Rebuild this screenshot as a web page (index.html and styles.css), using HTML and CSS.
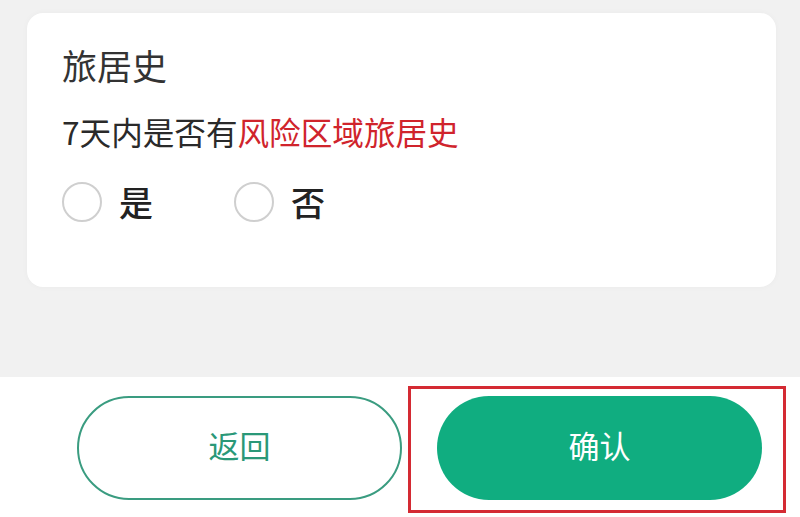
FILE: index.html
```html
<!DOCTYPE html>
<html lang="zh-CN">
<head>
<meta charset="utf-8">
<title>旅居史</title>
<link rel="stylesheet" href="styles.css">
</head>
<body>
<main class="content">
  <section class="card">
    <h2 class="card-title">旅居史</h2>
    <p class="question">7天内是否有<span class="danger">风险区域旅居史</span></p>
    <div class="options">
      <label class="option"><span class="radio"></span><span class="option-text">是</span></label>
      <label class="option"><span class="radio"></span><span class="option-text">否</span></label>
    </div>
  </section>
</main>
<footer class="bar">
  <button class="btn btn-back">返回</button>
  <button class="btn btn-confirm">确认</button>
  <div class="highlight"></div>
</footer>
</body>
</html>
```

FILE: styles.css
```css
* { box-sizing: border-box; }
html, body { margin: 0; padding: 0; }
body {
  width: 800px;
  height: 517px;
  overflow: hidden;
  background: #f1f1f1;
  font-family: "Noto Sans CJK SC", "Noto Sans", sans-serif;
  color: #222;
}
.content {
  height: 377px;
  padding: 13px 24px 0 27px;
}
.card {
  width: 749px;
  height: 274px;
  background: #fff;
  border-radius: 16px;
  box-shadow: 0 0 6px rgba(0, 0, 0, 0.03);
  padding: 32px 35px 0 35px;
}
.card-title {
  margin: 0;
  font-size: 35px;
  line-height: 40px;
  font-weight: 400;
  color: #333;
}
.question {
  margin: 26px 0 0 0;
  font-size: 31.6px;
  line-height: 40px;
  color: #2a2a2a;
}
.danger { color: #d0242c; }
.options {
  display: flex;
  gap: 81px;
  margin-top: 31px;
}
.option {
  display: flex;
  align-items: center;
  gap: 17px;
  height: 40px;
}
.radio {
  width: 40px;
  height: 40px;
  border: 2px solid #cfcfcf;
  border-radius: 50%;
  background: #fff;
}
.option-text {
  font-size: 34px;
  line-height: 40px;
  font-weight: 500;
  color: #222;
}
.bar {
  position: relative;
  height: 140px;
  background: #fff;
  display: flex;
  gap: 35px;
  padding: 19px 0 0 77px;
}
.btn {
  width: 325px;
  height: 104px;
  border-radius: 52px;
  font-family: "Noto Sans CJK SC", "Noto Sans", sans-serif;
  font-size: 31px;
  font-weight: 400;
  padding: 0 0 8px 0;
}
.btn-back {
  background: #fff;
  border: 2px solid #3a9c80;
  color: #2a9878;
}
.btn-confirm {
  background: #10ad80;
  border: none;
  color: #fff;
}
.highlight {
  position: absolute;
  left: 408px;
  top: 9px;
  width: 378px;
  height: 127px;
  border: 3px solid #d42a33;
}
```
